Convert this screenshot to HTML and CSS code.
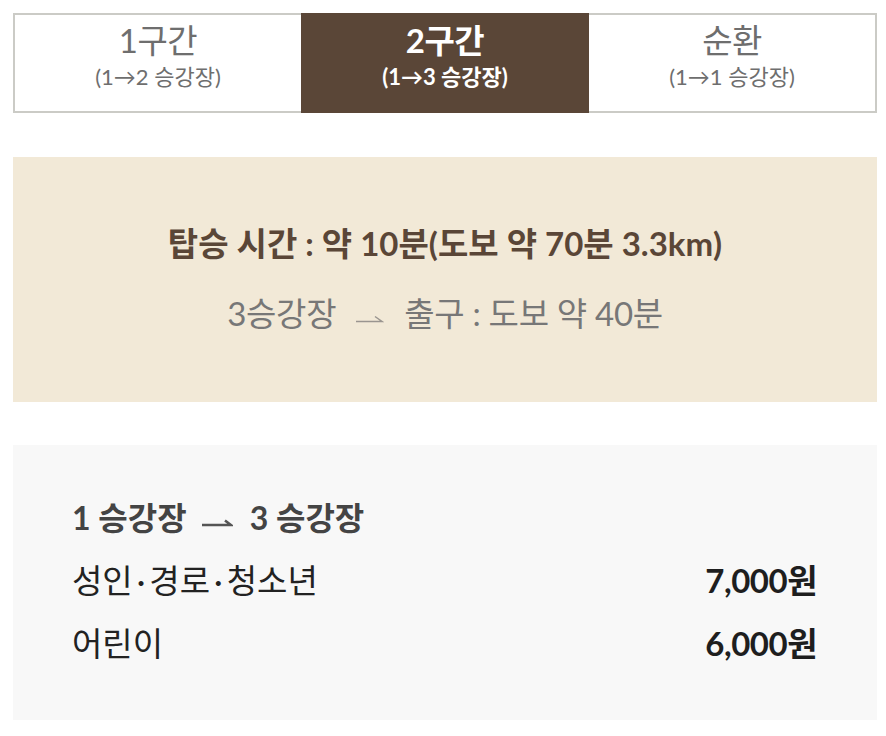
FILE: index.html
```html
<!DOCTYPE html>
<html lang="ko">
<head>
<meta charset="utf-8">
<title>구간 요금</title>
<link rel="stylesheet" href="styles.css">
</head>
<body>
<div class="page">
  <div class="tabs">
    <div class="tab tab-first">
      <div class="tab-title">1구간</div>
      <div class="tab-sub">(1→2 승강장)</div>
    </div>
    <div class="tab tab-active">
      <div class="tab-title">2구간</div>
      <div class="tab-sub">(1→3 승강장)</div>
    </div>
    <div class="tab tab-last">
      <div class="tab-title">순환</div>
      <div class="tab-sub">(1→1 승강장)</div>
    </div>
  </div>

  <div class="info">
    <div class="info-title">탑승 시간 : 약 10분(도보 약 70분 3.3km)</div>
    <div class="info-sub">3승강장<svg class="harpoon light" width="28" height="12" viewBox="0 0 28 12"><path d="M0 9.5H26L19 4.5" fill="none" stroke="#9a9590" stroke-width="1.5"/></svg>출구 : 도보 약 40분</div>
  </div>

  <div class="fare">
    <div class="fare-head">1 승강장<svg class="harpoon dark" width="31" height="12" viewBox="0 0 31 12"><path d="M0 9H29L23 4.5" fill="none" stroke="#555" stroke-width="2.6"/></svg>3 승강장</div>
    <div class="fare-row">
      <span class="fare-name">성인<span class="dot">·</span>경로<span class="dot">·</span>청소년</span>
      <span class="fare-price">7,000원</span>
    </div>
    <div class="fare-row">
      <span class="fare-name">어린이</span>
      <span class="fare-price">6,000원</span>
    </div>
  </div>
</div>
</body>
</html>
```
FILE: styles.css
```css
html, body {
  margin: 0;
  padding: 0;
  background: #ffffff;
}
body {
  font-family: Lato, "Noto Sans CJK KR", sans-serif;
}
.page {
  padding: 13px 9px 0 13px;
}
.tabs {
  display: grid;
  grid-template-columns: 1fr 1fr 1fr;
}
.tab {
  border-top: 2px solid #cbcbc6;
  border-bottom: 2px solid #cbcbc6;
  text-align: center;
  color: #6e6e6e;
  padding-top: 6px;
  height: 90px;
}
.tab-first { border-left: 2px solid #cbcbc6; }
.tab-last { border-right: 2px solid #cbcbc6; }
.tab-active {
  background: #5a4637;
  border-color: #5a4637;
  color: #ffffff;
  font-weight: 700;
}
.tab-title {
  font-size: 33px;
  line-height: 38px;
  letter-spacing: -0.5px;
}
.tab-sub {
  font-size: 22px;
  line-height: 28px;
  margin-top: 4px;
}
.info {
  margin-top: 44px;
  background: #f2e9d7;
  padding: 66px 0 69px;
  text-align: center;
}
.info-title {
  font-size: 33px;
  line-height: 40px;
  font-weight: 700;
  color: #5a4637;
}
.info-sub {
  margin-top: 30px;
  font-size: 33px;
  line-height: 40px;
  color: #777777;
  letter-spacing: -0.3px;
}
.harpoon {
  display: inline-block;
  vertical-align: middle;
}
.harpoon.light { margin: 0 20px 0 20px; }
.harpoon.dark { margin: 0 17px 0 15px; }
.fare {
  margin-top: 43px;
  background: #f8f8f8;
  padding: 53px 60px 57px 59px;
}
.fare-head {
  font-size: 32px;
  line-height: 40px;
  font-weight: 700;
  color: #444444;
}
.fare-row {
  display: flex;
  justify-content: space-between;
  font-size: 33px;
  line-height: 40px;
  color: #222222;
  margin-top: 22px;
}
.fare-row + .fare-row {
  margin-top: 23px;
}
.dot {
  margin: 0 4px;
}
.fare-price {
  font-weight: 700;
  color: #1e1e1e;
  letter-spacing: -0.5px;
}
```
